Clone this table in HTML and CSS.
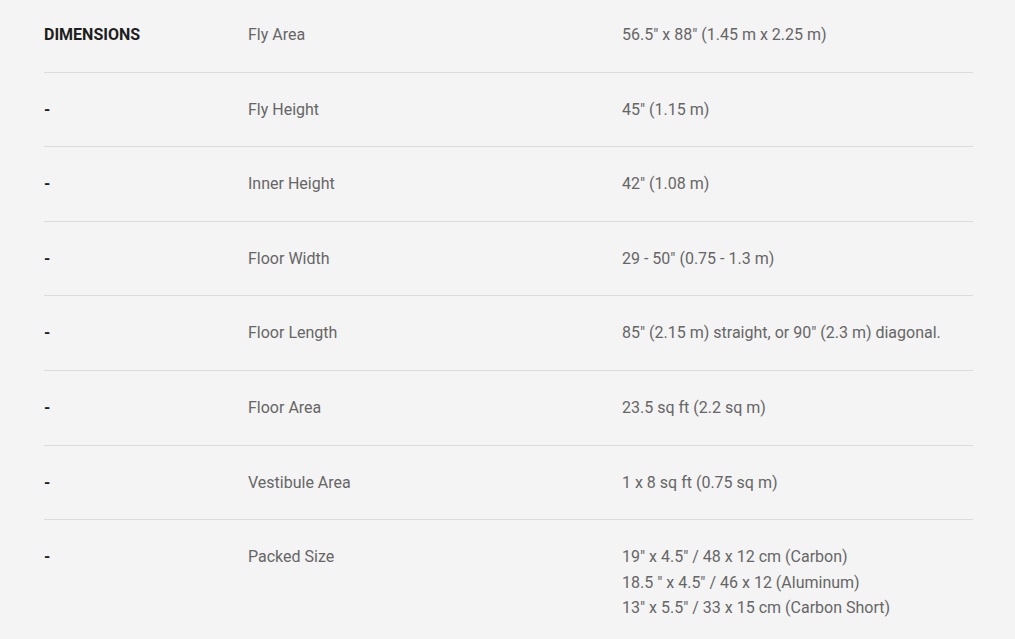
FILE: index.html
```html
<!DOCTYPE html>
<html>
<head>
<meta charset="utf-8">
<link rel="stylesheet" href="styles.css">
</head>
<body>
<div class="specs">
  <div class="row first"><div class="cat">DIMENSIONS</div><div class="name">Fly Area</div><div class="val">56.5" x 88" (1.45 m x 2.25 m)</div></div>
  <div class="row"><div class="cat">-</div><div class="name">Fly Height</div><div class="val">45" (1.15 m)</div></div>
  <div class="row"><div class="cat">-</div><div class="name">Inner Height</div><div class="val">42" (1.08 m)</div></div>
  <div class="row"><div class="cat">-</div><div class="name">Floor Width</div><div class="val">29 - 50" (0.75 - 1.3 m)</div></div>
  <div class="row"><div class="cat">-</div><div class="name">Floor Length</div><div class="val">85" (2.15 m) straight, or 90" (2.3 m) diagonal.</div></div>
  <div class="row"><div class="cat">-</div><div class="name">Floor Area</div><div class="val">23.5 sq ft (2.2 sq m)</div></div>
  <div class="row"><div class="cat">-</div><div class="name">Vestibule Area</div><div class="val">1 x 8 sq ft (0.75 sq m)</div></div>
  <div class="row last"><div class="cat">-</div><div class="name">Packed Size</div><div class="val">19" x 4.5" / 48 x 12 cm (Carbon)<br>18.5 " x 4.5" / 46 x 12 (Aluminum)<br>13" x 5.5" / 33 x 15 cm (Carbon Short)</div></div>
</div>
</body>
</html>
```

FILE: styles.css
```css
html, body {
  margin: 0;
  padding: 0;
  background: #f4f4f4;
}
body {
  font-family: Roboto, "Liberation Sans", sans-serif;
  font-size: 16px;
  line-height: 25.6px;
  color: #666;
}
.specs {
  width: 929px;
  margin-left: 44px;
}
.row {
  display: grid;
  grid-template-columns: 204px 374px 1fr;
  padding: 24px 0;
  border-bottom: 1px solid #dcdcdc;
}
.row.first {
  padding-top: 22px;
}
.row.last {
  border-bottom: none;
}
.cat {
  font-weight: 700;
  color: #1e1e1e;
}
```
